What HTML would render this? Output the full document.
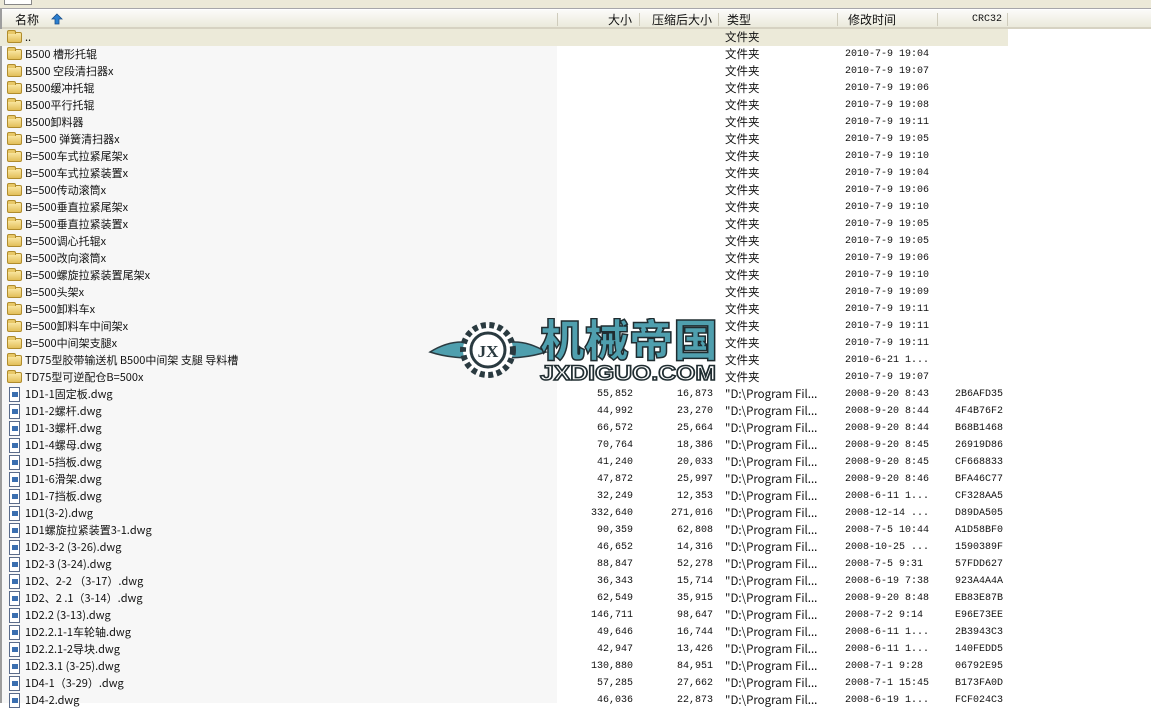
<!DOCTYPE html>
<html><head><meta charset="utf-8"><style>
*{margin:0;padding:0;box-sizing:border-box}
body{width:1151px;height:703px;overflow:hidden;background:#fff;position:relative;font-family:"Liberation Mono","Noto Sans CJK SC",monospace;font-size:10px;color:#111}
.top{position:absolute;left:0;top:0;width:1151px;height:9px;background:#ece9d8;border-bottom:1px solid #a7a6aa}
.top i{position:absolute;left:4px;top:0;width:28px;height:5px;background:#fff;border:1px solid #888;border-top:none}
.hdr{position:absolute;left:0;top:9px;width:1151px;height:20px;background:linear-gradient(#fbfbf9,#ebeadb);border-bottom:2px solid #d6d2c2;border-top:1px solid #fff;font-family:"Noto Sans CJK SC",sans-serif;font-size:12px}
.hdr span{position:absolute;top:1px;line-height:17px}
.hdr b{position:absolute;top:3px;width:1px;height:13px;background:#cfccbc}
.namecol{position:absolute;left:0;top:29px;width:557px;height:674px;background:#f7f7f7}
.lb{position:absolute;left:0;top:9px;width:2px;height:694px;background:#9d9d9d}
.r{position:absolute;left:0;width:1151px;height:17px;line-height:17px;white-space:nowrap}
.r span{position:absolute;top:0}
.n{left:25px;font-family:"Noto Sans CJK SC",sans-serif;font-size:11px}
.s{right:518px}
.c{right:438px}
.t{left:725px;font-family:"Noto Sans CJK SC",sans-serif;font-size:11.5px}
.d{left:845px}
.k{left:955px}
.f{position:absolute;left:7px;top:3px;width:15px;height:11px;background:linear-gradient(#fbe9a6,#e2bf5a);border:1px solid #b08c2c;border-radius:2px}
.f:before{content:"";position:absolute;left:-1px;top:-3px;width:7px;height:3px;background:#e8c868;border:1px solid #b08c2c;border-bottom:none;border-radius:2px 2px 0 0}
.g{position:absolute;left:9px;top:1px;width:11px;height:15px;background:#fff;border:1px solid #5a6b8a}
.g:after{content:"";position:absolute;left:2px;top:4px;width:6px;height:5px;background:#3b6fb0}
</style></head><body>
<div class="top"><i></i></div>
<div class="namecol"></div>
<div class="hdr">
<span style="left:15px">名称</span>
<svg style="position:absolute;left:51px;top:3px" width="12" height="12" viewBox="0 0 12 12"><path d="M6 1 L11 6 H8 V11 H4 V6 H1 Z" fill="#2a7fd0" stroke="#1b4f8a" stroke-width="0.8"/></svg>
<b style="left:557px"></b><span style="left:608px">大小</span>
<b style="left:639px"></b><span style="left:652px">压缩后大小</span>
<b style="left:718px"></b><span style="left:727px">类型</span>
<b style="left:837px"></b><span style="left:848px">修改时间</span>
<b style="left:937px"></b><span style="left:972px;font-family:'Liberation Mono',monospace;font-size:10px">CRC32</span>
<b style="left:1007px"></b>
</div>
<div class="lb"></div>
<div class="r" style="top:29px;width:1008px;background:#ecead9"><i class="f"></i><span class="n">..</span><span class="t">文件夹</span></div>
<div class="r" style="top:46px"><i class="f"></i><span class="n">B500 槽形托辊</span><span class="t">文件夹</span><span class="d">2010-7-9 19:04</span></div>
<div class="r" style="top:63px"><i class="f"></i><span class="n">B500 空段清扫器x</span><span class="t">文件夹</span><span class="d">2010-7-9 19:07</span></div>
<div class="r" style="top:80px"><i class="f"></i><span class="n">B500缓冲托辊</span><span class="t">文件夹</span><span class="d">2010-7-9 19:06</span></div>
<div class="r" style="top:97px"><i class="f"></i><span class="n">B500平行托辊</span><span class="t">文件夹</span><span class="d">2010-7-9 19:08</span></div>
<div class="r" style="top:114px"><i class="f"></i><span class="n">B500卸料器</span><span class="t">文件夹</span><span class="d">2010-7-9 19:11</span></div>
<div class="r" style="top:131px"><i class="f"></i><span class="n">B=500 弹簧清扫器x</span><span class="t">文件夹</span><span class="d">2010-7-9 19:05</span></div>
<div class="r" style="top:148px"><i class="f"></i><span class="n">B=500车式拉紧尾架x</span><span class="t">文件夹</span><span class="d">2010-7-9 19:10</span></div>
<div class="r" style="top:165px"><i class="f"></i><span class="n">B=500车式拉紧装置x</span><span class="t">文件夹</span><span class="d">2010-7-9 19:04</span></div>
<div class="r" style="top:182px"><i class="f"></i><span class="n">B=500传动滚筒x</span><span class="t">文件夹</span><span class="d">2010-7-9 19:06</span></div>
<div class="r" style="top:199px"><i class="f"></i><span class="n">B=500垂直拉紧尾架x</span><span class="t">文件夹</span><span class="d">2010-7-9 19:10</span></div>
<div class="r" style="top:216px"><i class="f"></i><span class="n">B=500垂直拉紧装置x</span><span class="t">文件夹</span><span class="d">2010-7-9 19:05</span></div>
<div class="r" style="top:233px"><i class="f"></i><span class="n">B=500调心托辊x</span><span class="t">文件夹</span><span class="d">2010-7-9 19:05</span></div>
<div class="r" style="top:250px"><i class="f"></i><span class="n">B=500改向滚筒x</span><span class="t">文件夹</span><span class="d">2010-7-9 19:06</span></div>
<div class="r" style="top:267px"><i class="f"></i><span class="n">B=500螺旋拉紧装置尾架x</span><span class="t">文件夹</span><span class="d">2010-7-9 19:10</span></div>
<div class="r" style="top:284px"><i class="f"></i><span class="n">B=500头架x</span><span class="t">文件夹</span><span class="d">2010-7-9 19:09</span></div>
<div class="r" style="top:301px"><i class="f"></i><span class="n">B=500卸料车x</span><span class="t">文件夹</span><span class="d">2010-7-9 19:11</span></div>
<div class="r" style="top:318px"><i class="f"></i><span class="n">B=500卸料车中间架x</span><span class="t">文件夹</span><span class="d">2010-7-9 19:11</span></div>
<div class="r" style="top:335px"><i class="f"></i><span class="n">B=500中间架支腿x</span><span class="t">文件夹</span><span class="d">2010-7-9 19:11</span></div>
<div class="r" style="top:352px"><i class="f"></i><span class="n">TD75型胶带输送机 B500中间架 支腿 导料槽</span><span class="t">文件夹</span><span class="d">2010-6-21 1...</span></div>
<div class="r" style="top:369px"><i class="f"></i><span class="n">TD75型可逆配仓B=500x</span><span class="t">文件夹</span><span class="d">2010-7-9 19:07</span></div>
<div class="r" style="top:386px"><i class="g"></i><span class="n">1D1-1固定板.dwg</span><span class="s">55,852</span><span class="c">16,873</span><span class="t">"D:\Program Fil...</span><span class="d">2008-9-20 8:43</span><span class="k">2B6AFD35</span></div>
<div class="r" style="top:403px"><i class="g"></i><span class="n">1D1-2螺杆.dwg</span><span class="s">44,992</span><span class="c">23,270</span><span class="t">"D:\Program Fil...</span><span class="d">2008-9-20 8:44</span><span class="k">4F4B76F2</span></div>
<div class="r" style="top:420px"><i class="g"></i><span class="n">1D1-3螺杆.dwg</span><span class="s">66,572</span><span class="c">25,664</span><span class="t">"D:\Program Fil...</span><span class="d">2008-9-20 8:44</span><span class="k">B68B1468</span></div>
<div class="r" style="top:437px"><i class="g"></i><span class="n">1D1-4螺母.dwg</span><span class="s">70,764</span><span class="c">18,386</span><span class="t">"D:\Program Fil...</span><span class="d">2008-9-20 8:45</span><span class="k">26919D86</span></div>
<div class="r" style="top:454px"><i class="g"></i><span class="n">1D1-5挡板.dwg</span><span class="s">41,240</span><span class="c">20,033</span><span class="t">"D:\Program Fil...</span><span class="d">2008-9-20 8:45</span><span class="k">CF668833</span></div>
<div class="r" style="top:471px"><i class="g"></i><span class="n">1D1-6滑架.dwg</span><span class="s">47,872</span><span class="c">25,997</span><span class="t">"D:\Program Fil...</span><span class="d">2008-9-20 8:46</span><span class="k">BFA46C77</span></div>
<div class="r" style="top:488px"><i class="g"></i><span class="n">1D1-7挡板.dwg</span><span class="s">32,249</span><span class="c">12,353</span><span class="t">"D:\Program Fil...</span><span class="d">2008-6-11 1...</span><span class="k">CF328AA5</span></div>
<div class="r" style="top:505px"><i class="g"></i><span class="n">1D1(3-2).dwg</span><span class="s">332,640</span><span class="c">271,016</span><span class="t">"D:\Program Fil...</span><span class="d">2008-12-14 ...</span><span class="k">D89DA505</span></div>
<div class="r" style="top:522px"><i class="g"></i><span class="n">1D1螺旋拉紧装置3-1.dwg</span><span class="s">90,359</span><span class="c">62,808</span><span class="t">"D:\Program Fil...</span><span class="d">2008-7-5 10:44</span><span class="k">A1D58BF0</span></div>
<div class="r" style="top:539px"><i class="g"></i><span class="n">1D2-3-2 (3-26).dwg</span><span class="s">46,652</span><span class="c">14,316</span><span class="t">"D:\Program Fil...</span><span class="d">2008-10-25 ...</span><span class="k">1590389F</span></div>
<div class="r" style="top:556px"><i class="g"></i><span class="n">1D2-3 (3-24).dwg</span><span class="s">88,847</span><span class="c">52,278</span><span class="t">"D:\Program Fil...</span><span class="d">2008-7-5 9:31</span><span class="k">57FDD627</span></div>
<div class="r" style="top:573px"><i class="g"></i><span class="n">1D2、2-2 （3-17）.dwg</span><span class="s">36,343</span><span class="c">15,714</span><span class="t">"D:\Program Fil...</span><span class="d">2008-6-19 7:38</span><span class="k">923A4A4A</span></div>
<div class="r" style="top:590px"><i class="g"></i><span class="n">1D2、2 .1（3-14）.dwg</span><span class="s">62,549</span><span class="c">35,915</span><span class="t">"D:\Program Fil...</span><span class="d">2008-9-20 8:48</span><span class="k">EB83E87B</span></div>
<div class="r" style="top:607px"><i class="g"></i><span class="n">1D2.2 (3-13).dwg</span><span class="s">146,711</span><span class="c">98,647</span><span class="t">"D:\Program Fil...</span><span class="d">2008-7-2 9:14</span><span class="k">E96E73EE</span></div>
<div class="r" style="top:624px"><i class="g"></i><span class="n">1D2.2.1-1车轮轴.dwg</span><span class="s">49,646</span><span class="c">16,744</span><span class="t">"D:\Program Fil...</span><span class="d">2008-6-11 1...</span><span class="k">2B3943C3</span></div>
<div class="r" style="top:641px"><i class="g"></i><span class="n">1D2.2.1-2导块.dwg</span><span class="s">42,947</span><span class="c">13,426</span><span class="t">"D:\Program Fil...</span><span class="d">2008-6-11 1...</span><span class="k">140FEDD5</span></div>
<div class="r" style="top:658px"><i class="g"></i><span class="n">1D2.3.1 (3-25).dwg</span><span class="s">130,880</span><span class="c">84,951</span><span class="t">"D:\Program Fil...</span><span class="d">2008-7-1 9:28</span><span class="k">06792E95</span></div>
<div class="r" style="top:675px"><i class="g"></i><span class="n">1D4-1（3-29）.dwg</span><span class="s">57,285</span><span class="c">27,662</span><span class="t">"D:\Program Fil...</span><span class="d">2008-7-1 15:45</span><span class="k">B173FA0D</span></div>
<div class="r" style="top:692px"><i class="g"></i><span class="n">1D4-2.dwg</span><span class="s">46,036</span><span class="c">22,873</span><span class="t">"D:\Program Fil...</span><span class="d">2008-6-19 1...</span><span class="k">FCF024C3</span></div>
<svg style="position:absolute;left:428px;top:318px" width="292" height="66" viewBox="0 0 292 66">
<path d="M2 34 C18 24 34 22 48 26 L50 40 C36 40 20 40 2 34Z" fill="#4f9fae" stroke="#2a3a40" stroke-width="1.5"/>
<path d="M118 34 C102 24 86 22 72 26 L70 40 C84 40 100 40 118 34Z" fill="#4f9fae" stroke="#2a3a40" stroke-width="1.5"/>
<circle cx="60" cy="32" r="25" fill="#fff" stroke="#2a3a40" stroke-width="6" stroke-dasharray="5 3.5"/>
<circle cx="60" cy="32" r="17" fill="#fff" stroke="#2a3a40" stroke-width="3"/>
<text x="60" y="39" text-anchor="middle" font-family="Liberation Serif,serif" font-size="17" font-weight="bold" fill="#2a3a40">JX</text>
<text x="112" y="38" font-family="Noto Sans CJK SC,sans-serif" font-weight="900" font-size="44" fill="#4f9fae" stroke="#1f2c30" stroke-width="1.5" textLength="178" lengthAdjust="spacingAndGlyphs">机械帝国</text>
<text x="112" y="62" font-family="Liberation Sans,sans-serif" font-weight="bold" font-size="21" fill="#fff" stroke="#1f2c30" stroke-width="1.5" textLength="176" lengthAdjust="spacingAndGlyphs">JXDIGUO.COM</text>
</svg>
</body></html>
